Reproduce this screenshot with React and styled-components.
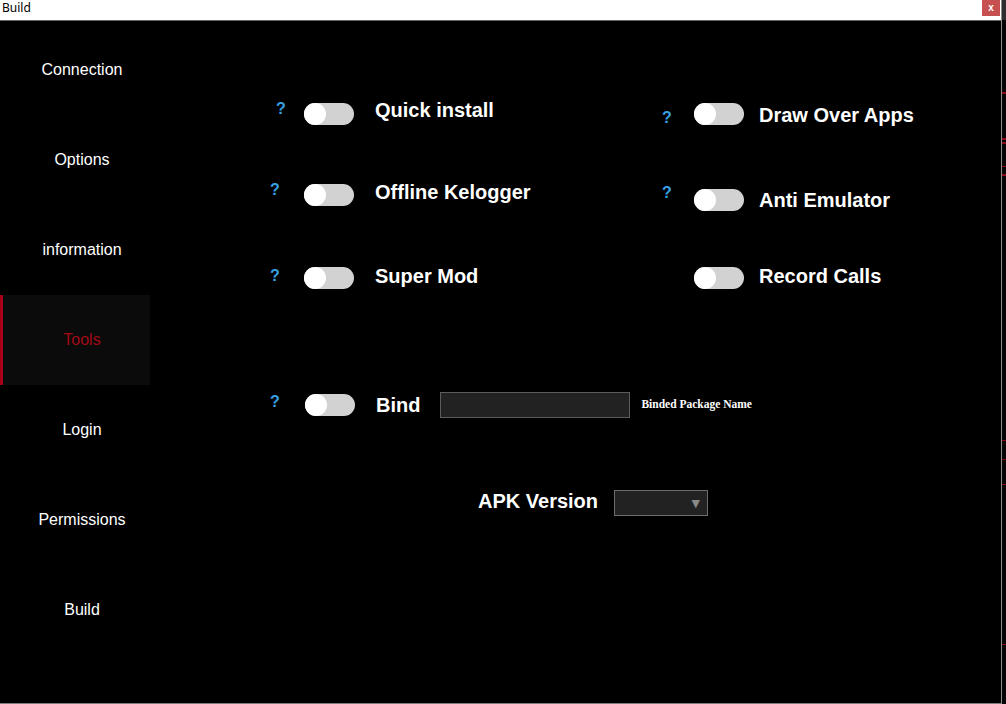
import React from 'react'
import styled, { createGlobalStyle } from 'styled-components'

const GlobalStyle = createGlobalStyle`
    html, body {
        margin: 0;
        padding: 0;
        background: #1a1a1a;
        overflow: hidden;
    }
    * {
        box-sizing: border-box;
    }
`

const Page = styled.div`
    display: flex;
    width: 1006px;
    height: 704px;
`

const Window = styled.div`
    width: 1002px;
    height: 704px;
    display: flex;
    flex-direction: column;
    border-right: 1px solid #8c8c8c;
    border-bottom: 1px solid #7a7a7a;
    background: #000;
`

const BackStrip = styled.div`
    flex: 1;
    background:
        linear-gradient(#2e2e2e, #2e2e2e) 0 0 / 100% 20px no-repeat,
        linear-gradient(
            to bottom,
            transparent 92px, #8a0b18 92px, #8a0b18 94px,
            transparent 94px, transparent 138px, #8a0b18 138px, #8a0b18 140px,
            transparent 140px, transparent 142px, #8a0b18 142px, #8a0b18 144px,
            transparent 144px, transparent 166px, #8a0b18 166px, #8a0b18 167px,
            transparent 167px, transparent 174px, #8a0b18 174px, #8a0b18 176px,
            transparent 176px, transparent 440px, #8a0b18 440px, #8a0b18 441px,
            transparent 441px, transparent 459px, #6a0a14 459px, #6a0a14 460px,
            transparent 460px, transparent 484px, #8a0b18 484px, #8a0b18 485px,
            transparent 485px, transparent 644px, #8a0b18 644px, #8a0b18 645px,
            transparent 645px
        ),
        #050505;
`

const TitleBar = styled.div`
    height: 21px;
    flex-shrink: 0;
    display: flex;
    align-items: flex-start;
    justify-content: space-between;
    background: #fff;
    border-bottom: 1px solid #666;
`

const Title = styled.span`
    font-family: 'Noto Sans', 'Liberation Sans', sans-serif;
    font-size: 12px;
    line-height: 16px;
    color: #000;
    padding-left: 2px;
`

const CloseButton = styled.div`
    width: 18px;
    height: 16px;
    margin-right: 1px;
    background: #c75050;
    color: #fff;
    font-family: 'Liberation Sans', sans-serif;
    font-weight: bold;
    font-size: 10px;
    line-height: 15px;
    text-align: center;
`

const Body = styled.div`
    flex: 1;
    display: flex;
`

const Sidebar = styled.nav`
    width: 150px;
    flex-shrink: 0;
    padding-top: 4px;
    display: flex;
    flex-direction: column;
`

const NavItem = styled.div`
    height: 90px;
    display: flex;
    align-items: center;
    justify-content: center;
    font-family: 'Liberation Sans', Arial, sans-serif;
    font-size: 16px;
    color: ${(p) => (p.$active ? '#a30a16' : '#fff')};
    background: ${(p) => (p.$active ? '#0b0b0b' : 'transparent')};
    border-left: 3px solid ${(p) => (p.$active ? '#a8001a' : 'transparent')};
    padding-left: 11px;
`

const Main = styled.main`
    flex: 1;
    display: flex;
    flex-direction: column;
    align-items: flex-start;
    padding: 82px 0 0 120px;
`

const OptionsGrid = styled.div`
    display: grid;
    grid-template-columns: 390px 1fr;
    grid-auto-rows: 22px;
    row-gap: 61px;
`

const Option = styled.div`
    display: flex;
    align-items: center;
    height: 22px;
    margin-top: ${(p) => p.$dy || 0}px;
`

const Help = styled.span`
    width: ${(p) => p.$w || 34}px;
    padding-left: ${(p) => p.$pl ?? 4}px;
    align-self: flex-start;
    margin-top: ${(p) => p.$mt ?? -7}px;
    font-family: 'Liberation Sans', Arial, sans-serif;
    font-weight: bold;
    font-size: 16px;
    color: #3aa0e4;
    visibility: ${(p) => (p.$hidden ? 'hidden' : 'visible')};
`

const Toggle = styled.span`
    width: 50px;
    height: 22px;
    border-radius: 11px;
    background: #d2d2d2;
    display: flex;
    align-items: center;
    flex-shrink: 0;

    &::before {
        content: '';
        width: 22px;
        height: 22px;
        border-radius: 50%;
        background: #fff;
    }
`

const Label = styled.span`
    margin-left: ${(p) => p.$gap ?? 21}px;
    margin-top: ${(p) => p.$lift || 0}px;
    font-family: 'Liberation Sans', Arial, sans-serif;
    font-weight: bold;
    font-size: 20px;
    color: #fff;
    white-space: nowrap;
`

const BindRow = styled.div`
    display: flex;
    align-items: center;
    height: 25px;
    margin-top: 101px;
`

const TextBox = styled.div`
    width: 190px;
    height: 26px;
    margin-left: 20px;
    background: #222;
    border: 1px solid #5c5c5c;
`

const Caption = styled.span`
    margin-left: 11px;
    margin-top: -2px;
    font-family: 'Liberation Serif', 'Times New Roman', serif;
    font-weight: bold;
    font-size: 11.5px;
    color: #fff;
`

const VersionRow = styled.div`
    display: flex;
    align-items: center;
    height: 26px;
    margin-top: 73px;
    margin-left: 208px;
`

const Select = styled.div`
    width: 94px;
    height: 26px;
    margin-left: 16px;
    background: #222;
    border: 1px solid #6e6e6e;
    display: flex;
    align-items: center;
    justify-content: flex-end;
    padding-right: 7px;
    color: #8a8a8a;
    font-family: 'DejaVu Sans', sans-serif;
    font-size: 11px;
`

const navItems = ['Connection', 'Options', 'information', 'Tools', 'Login', 'Permissions', 'Build']

const App = () => {
    return (
        <>
            <GlobalStyle />
            <Page>
                <Window>
                    <TitleBar>
                        <Title>Build</Title>
                        <CloseButton>x</CloseButton>
                    </TitleBar>
                    <Body>
                        <Sidebar>
                            {navItems.map((item) => (
                                <NavItem key={item} $active={item === 'Tools'}>
                                    {item}
                                </NavItem>
                            ))}
                        </Sidebar>
                        <Main>
                            <OptionsGrid>
                                <Option>
                                    <Help $pl={6} $mt={-3}>?</Help>
                                    <Toggle />
                                    <Label $lift={-7}>Quick install</Label>
                                </Option>
                                <Option>
                                    <Help $pl={2} $mt={6}>?</Help>
                                    <Toggle />
                                    <Label $gap={15} $lift={2}>Draw Over Apps</Label>
                                </Option>
                                <Option $dy={-2}>
                                    <Help $pl={0} $mt={-3}>?</Help>
                                    <Toggle />
                                    <Label $lift={-6}>Offline Kelogger</Label>
                                </Option>
                                <Option $dy={3}>
                                    <Help $pl={2} $mt={-5}>?</Help>
                                    <Toggle />
                                    <Label $gap={15}>Anti Emulator</Label>
                                </Option>
                                <Option $dy={-2}>
                                    <Help $pl={0} $mt={0}>?</Help>
                                    <Toggle />
                                    <Label $lift={-4}>Super Mod</Label>
                                </Option>
                                <Option $dy={-2}>
                                    <Help $hidden>?</Help>
                                    <Toggle />
                                    <Label $gap={15} $lift={-4}>Record Calls</Label>
                                </Option>
                            </OptionsGrid>
                            <BindRow>
                                <Help $w={35} $pl={0} $mt={1}>?</Help>
                                <Toggle />
                                <Label $lift={2}>Bind</Label>
                                <TextBox />
                                <Caption>Binded Package Name</Caption>
                            </BindRow>
                            <VersionRow>
                                <Label $gap={0} $lift={-3}>APK Version</Label>
                                <Select>▼</Select>
                            </VersionRow>
                        </Main>
                    </Body>
                </Window>
                <BackStrip />
            </Page>
        </>
    )
}

export default App
